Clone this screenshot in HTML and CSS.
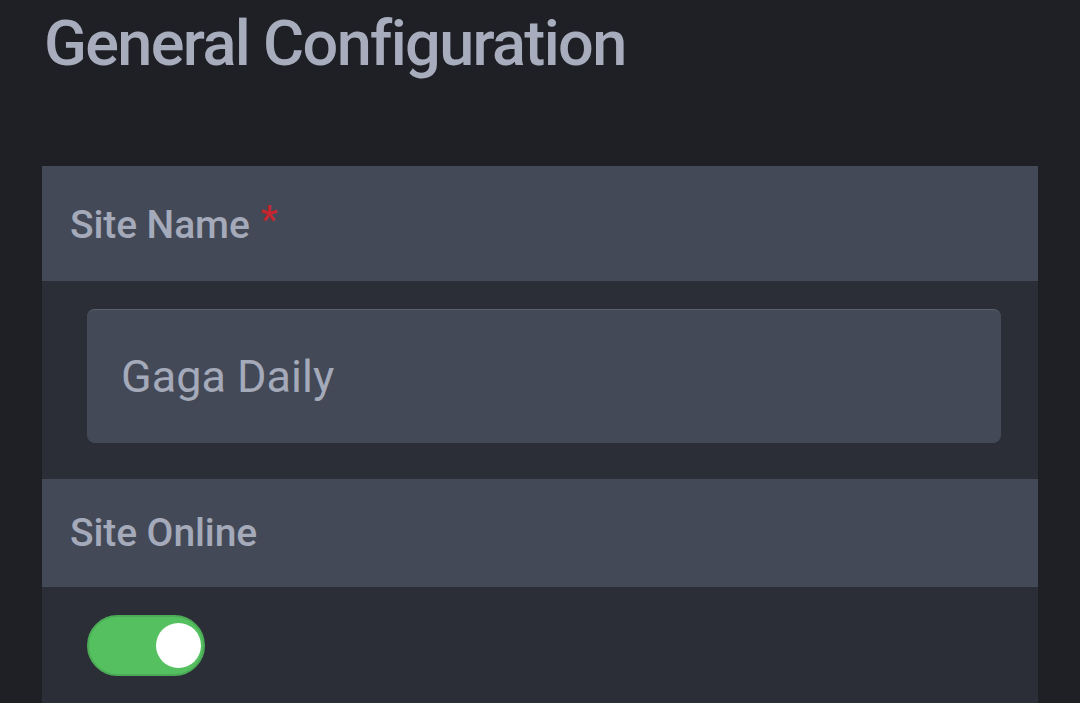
FILE: index.html
```html
<!DOCTYPE html>
<html lang="en">
<head>
<meta charset="utf-8">
<title>General Configuration</title>
<link rel="stylesheet" href="styles.css">
</head>
<body>
<main class="page">
  <h1 class="title">General Configuration</h1>
  <section class="panel">
    <div class="field-head field-head--required">
      <span class="label">Site Name</span><span class="req">*</span>
    </div>
    <div class="field-body field-body--input">
      <div class="input">Gaga Daily</div>
    </div>
    <div class="field-head">
      <span class="label">Site Online</span>
    </div>
    <div class="field-body">
      <div class="toggle"><span class="knob"></span></div>
    </div>
  </section>
</main>
</body>
</html>
```
FILE: styles.css
```css
html, body {
  margin: 0;
  padding: 0;
  background: #1f2026;
}
body {
  font-family: Roboto, "Noto Sans", sans-serif;
  color: #a4aab9;
}
.page {
  padding: 12px 42px 0 42px;
}
.title {
  margin: 0 0 91px 2px;
  font-size: 63px;
  line-height: 63px;
  font-weight: 500;
  color: #a7adbc;
  letter-spacing: -1.65px;
}
.panel {
  width: 996px;
  background: #2b2e36;
}
.field-head {
  background: #434957;
  padding: 35px 28px;
  display: flex;
  align-items: flex-start;
}
.field-head--required {
  padding-top: 40px;
  padding-bottom: 37px;
}
.label {
  font-size: 39px;
  line-height: 38px;
  font-weight: 500;
  color: #a4aab9;
  letter-spacing: -0.1px;
}
.req {
  color: #c4262e;
  font-size: 38px;
  line-height: 38px;
  font-weight: 500;
  margin-left: 11px;
  margin-top: -5px;
}
.field-body {
  padding: 28px 37px 27px 45px;
}
.field-body--input {
  padding-bottom: 36px;
}
.input {
  height: 134px;
  box-sizing: border-box;
  background: #434957;
  border-radius: 8px;
  border-top: 1.5px solid #5c616e;
  padding: 0 34px;
  display: flex;
  align-items: center;
  font-size: 45px;
  color: #a4aab9;
}
.toggle {
  width: 118px;
  height: 61px;
  box-sizing: border-box;
  border-radius: 31px;
  background: #55c060;
  border: 2px solid #4cab56;
  display: flex;
  align-items: center;
  justify-content: flex-end;
  padding-right: 2px;
}
.knob {
  width: 45px;
  height: 45px;
  border-radius: 50%;
  background: #ffffff;
}
```
